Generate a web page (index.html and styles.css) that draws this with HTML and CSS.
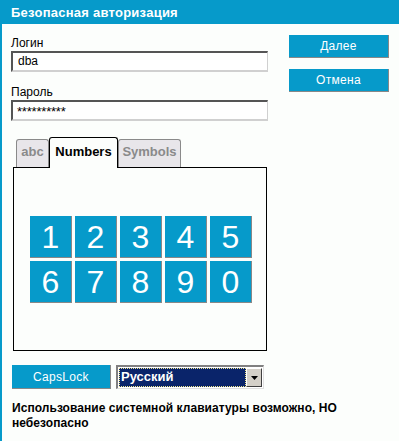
FILE: index.html
```html
<!DOCTYPE html>
<html lang="ru">
<head>
<meta charset="utf-8">
<title>Безопасная авторизация</title>
<link rel="stylesheet" href="styles.css">
</head>
<body>
<div class="page">
  <div class="titlebar">Безопасная авторизация</div>
  <div class="content">
    <div class="top">
      <div class="fields">
        <div class="lbl">Логин</div>
        <div class="input">dba</div>
        <div class="lbl lbl2">Пароль</div>
        <div class="input pwd">**********</div>
      </div>
      <div class="actions">
        <button class="btn">Далее</button>
        <button class="btn btn2">Отмена</button>
      </div>
    </div>
    <div class="tabs">
      <div class="tab tab-abc">abc</div>
      <div class="tab active tab-num">Numbers</div>
      <div class="tab tab-sym">Symbols</div>
    </div>
    <div class="panel">
      <div class="keys">
        <div class="key">1</div><div class="key">2</div><div class="key">3</div><div class="key">4</div><div class="key">5</div>
        <div class="key">6</div><div class="key">7</div><div class="key">8</div><div class="key">9</div><div class="key">0</div>
      </div>
    </div>
    <div class="controls">
      <button class="btn caps">CapsLock</button>
      <div class="select">
        <div class="sel-value"><span>Русский</span></div>
        <div class="sel-arrow"><svg width="7" height="4" viewBox="0 0 7 4"><path d="M0 0H7L3.5 4Z" fill="#000"/></svg></div>
      </div>
    </div>
    <p class="note">Использование системной клавиатуры возможно, НО небезопасно</p>
  </div>
</div>
</body>
</html>
```
FILE: styles.css
```css
* { box-sizing: border-box; }
html, body { margin: 0; padding: 0; }
body {
  background: #fcfefc;
  font-family: "Liberation Sans", Arial, sans-serif;
  font-size: 12px;
  color: #000;
}
.page { min-height: 441px; display: flex; flex-direction: column; }
.titlebar {
  height: 24px;
  background: #069aca;
  color: #fff;
  font-weight: bold;
  font-size: 13px;
  line-height: 24px;
  padding: 1px 0 0 11px;
  letter-spacing: 0.25px;
}
.content {
  flex: 1;
  border-left: 2px solid #069aca;
  padding-left: 9px;
}
.top { display: flex; }
.fields { width: 257px; margin-top: 12px; }
.lbl { line-height: 14px; margin-bottom: 1px; font-size: 12px; }
.lbl2 { margin-top: 13px; }
.input {
  height: 21px;
  border-top: 2px solid #555;
  border-left: 2px solid #555;
  border-bottom: 2px solid #d0d0d0;
  border-right: 1px solid #d0d0d0;
  background: #fff;
  padding-left: 5px;
  line-height: 17px;
  font-size: 12px;
}
.pwd { font-size: 13px; letter-spacing: -0.2px; line-height: 19px; padding-left: 4px; }
.actions { margin-left: 21px; margin-top: 11px; display: flex; flex-direction: column; }
.btn {
  width: 100px;
  height: 23px;
  background: #069aca;
  color: #fff;
  border: 0;
  border-right: 1px solid #888;
  border-bottom: 1px solid #888;
  font-family: "Liberation Sans", Arial, sans-serif;
  font-size: 12px;
  letter-spacing: 0.3px;
  padding: 0;
  margin: 0;
}
.btn2 { margin-top: 11px; height: 23px; }
.tabs { display: flex; align-items: flex-end; margin-top: 16px; padding-left: 5px; position: relative; z-index: 1; }
.tab {
  height: 28px;
  border: 1px solid #8a8a8a;
  border-bottom: 0;
  border-radius: 3px 3px 0 0;
  background: #e8e6ea;
  color: #8a8a8a;
  font-weight: bold;
  font-size: 13px;
  line-height: 16px;
  padding-top: 4px;
  text-align: center;
}
.tab-abc { width: 33px; }
.tab-num { width: 69px; }
.tab-sym { width: 63px; }
.tab.active {
  height: 31px;
  border-color: #000;
  background: #fcfefc;
  color: #000;
  padding-top: 6px;
  margin-bottom: -1px;
}
.panel {
  margin-left: 2px;
  width: 254px;
  height: 184px;
  border: 1px solid #000;
  padding: 48px 0 0 16px;
}
.keys { display: grid; grid-template-columns: repeat(5, 42px); grid-auto-rows: 42px; gap: 3px; }
.key {
  background: #069aca;
  border-right: 1px solid #888;
  border-bottom: 1px solid #888;
  color: #fff;
  font-size: 32px;
  display: flex;
  align-items: center;
  justify-content: center;
  padding-top: 1px;
}
.controls { display: flex; margin-top: 14px; margin-left: 1px; }
.caps { width: 99px; height: 24px; }
.select {
  margin-left: 5px;
  width: 148px;
  height: 24px;
  display: flex;
  border-top: 2px solid #808080;
  border-left: 2px solid #808080;
  border-bottom: 1px solid #e0e0e0;
  border-right: 1px solid #e0e0e0;
  background: #fff;
  padding: 1px;
}
.sel-value {
  flex: 1;
  background: #0a246a;
  border: 1px dotted #f0e68c;
  color: #fff;
  font-weight: bold;
  font-size: 13px;
  line-height: 16px;
  padding-left: 1px;
}
.sel-arrow {
  width: 16px;
  background: #d4d0c8;
  border-top: 1px solid #fff;
  border-left: 1px solid #fff;
  border-right: 1px solid #404040;
  border-bottom: 1px solid #404040;
  display: flex;
  align-items: center;
  justify-content: center;
}
.note {
  margin: 12px 0 0 1px;
  font-weight: bold;
  font-size: 12px;
  line-height: 15px;
  letter-spacing: 0.05px;
}
```
